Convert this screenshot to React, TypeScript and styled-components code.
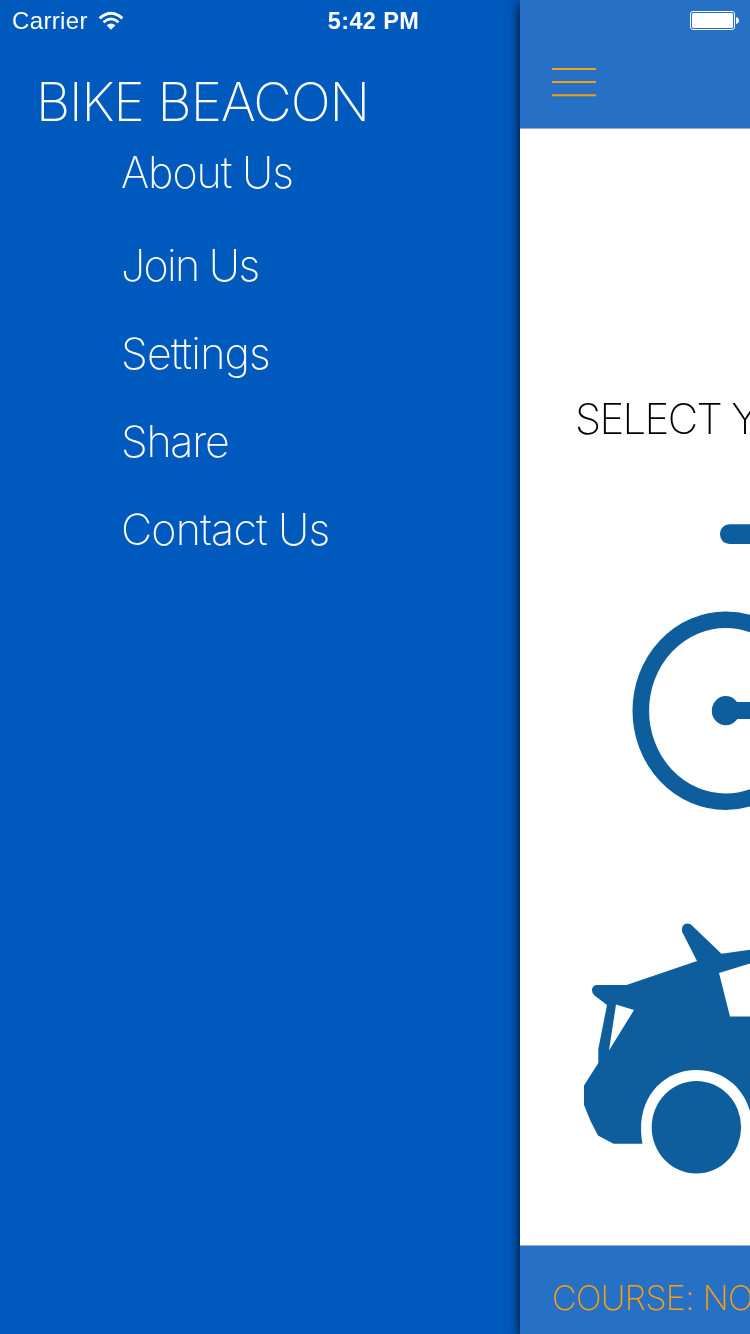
import React from "react";
import styled, { createGlobalStyle } from "styled-components";

const GlobalStyle = createGlobalStyle`
  * { box-sizing: border-box; }
  body { margin: 0; background: #0059bd; }
`;

const thin = `"Inter", "Helvetica Neue", sans-serif`;

const Screen = styled.div`
  position: relative;
  display: flex;
  width: 750px;
  height: 1334px;
  overflow: hidden;
  background: #0059bd;
  font-family: ${thin};
`;

const StatusBar = styled.header`
  position: absolute;
  inset: 0 0 auto 0;
  z-index: 2;
  display: grid;
  grid-template-columns: 1fr auto 1fr;
  align-items: center;
  height: 41px;
  padding: 0 11px 0 12px;
  color: #fff;
  font: 24px/41px "Liberation Sans", Arial, sans-serif;
`;

const Carrier = styled.div`
  display: flex;
  align-items: center;
  gap: 10px;
  letter-spacing: 0.35px;
`;

const Time = styled.div`
  padding: 2px 4px 0 0;
  font-weight: 700;
  font-size: 23.5px;
  line-height: 39px;
  letter-spacing: 0.35px;
`;

const Battery = styled.svg`
  justify-self: end;
  display: block;
`;

const Drawer = styled.nav`
  flex: 0 0 520px;
  padding-top: 72px;
  color: #fff;
  will-change: transform;
`;

const Title = styled.h1<{ $track: number }>`
  margin: 0 0 0 36px;
  font-size: 53px;
  font-weight: 200;
  line-height: 60px;
  letter-spacing: ${(p) => p.$track}px;
  white-space: nowrap;
`;

const Menu = styled.ul`
  margin: 0;
  padding: 0 0 0 121px;
  list-style: none;
`;

const MenuItem = styled.li<{ $height?: number; $gap?: number; $track: number }>`
  height: ${(p) => p.$height ?? 88}px;
  margin-bottom: ${(p) => p.$gap ?? 0}px;
  line-height: ${(p) => p.$height ?? 88}px;
  font-size: 43px;
  font-weight: 200;
  letter-spacing: ${(p) => p.$track}px;
  white-space: nowrap;
`;

const PanelFrame = styled.div`
  display: flex;
  box-shadow: 0 4px 11px rgba(0, 0, 0, 0.95);
  will-change: transform;
`;

const Panel = styled.main`
  flex: 0 0 230px;
  display: flex;
  flex-direction: column;
  overflow: hidden;
  background: #fff;
`;

const NavBar = styled.div`
  height: 129px;
  padding: 67px 0 0 32px;
  background: #2670c6;
  border-bottom: 1px solid #aaa9a9;
`;

const MenuButton = styled.button`
  display: block;
  padding: 0;
  border: 0;
  background: none;
`;

const Content = styled.section`
  flex: 1;
  display: flex;
  flex-direction: column;
  padding-top: 260px;
`;

const Heading = styled.h2`
  margin: 0 0 0 55px;
  height: 63px;
  color: #000;
  font-size: 42px;
  font-weight: 200;
  line-height: 60px;
  letter-spacing: -1.65px;
  white-space: nowrap;
`;

const Picture = styled.svg`
  display: block;
  flex: none;
`;

const Footer = styled.footer`
  height: 89px;
  padding: 16px 0 0 32px;
  background: #2670c6;
  border-top: 1px solid #aaa9a9;
  color: #ff9f0a;
  font-size: 34px;
  font-weight: 200;
  line-height: 72px;
  letter-spacing: -0.7px;
  white-space: nowrap;
`;

const items = [
  { label: "About Us", height: 81, gap: 8, track: -1.1 },
  { label: "Join Us", track: -1.7 },
  { label: "Settings", track: -0.85 },
  { label: "Share", track: -1.3 },
  { label: "Contact Us", track: -0.85 },
];

export default function App() {
  return (
    <>
      <GlobalStyle />
      <Screen>
        <StatusBar>
          <Carrier>
            Carrier
            <svg width="26" height="20" viewBox="0 0 26 20" fill="none" stroke="#fff">
              <path d="M1.7 7.4Q13 -2.8 24.3 7.4" strokeWidth="3" />
              <path d="M5.5 11.2Q13 4.6 20.5 11.2" strokeWidth="2.8" />
              <path d="M8.6 14.2Q13 10.6 17.4 14.2L13 18.8Z" fill="#fff" stroke="none" />
            </svg>
          </Carrier>
          <Time>5:42 PM</Time>
          <Battery width="49" height="19" viewBox="0 0 49 19">
            <rect x="0.5" y="0.5" width="44" height="18" rx="2.5" fill="none" stroke="#fff" />
            <rect x="2" y="2" width="41" height="15" rx="1.5" fill="#fff" />
            <path d="M46 6.2Q49 6.6 49 9.5T46 13Z" fill="#fff" />
          </Battery>
        </StatusBar>
        <Drawer>
          <Title $track={-1.05}>BIKE BEACON</Title>
          <Menu>
            {items.map((i) => (
              <MenuItem key={i.label} $height={i.height} $gap={i.gap} $track={i.track}>
                {i.label}
              </MenuItem>
            ))}
          </Menu>
        </Drawer>
        <PanelFrame>
          <Panel>
            <NavBar>
              <MenuButton aria-label="Menu">
                <Picture width="44" height="30" viewBox="0 0 44 30" stroke="#f59f14" strokeWidth="2">
                  <path d="M0 2H44M0 15H44M0 28.2H44" />
                </Picture>
              </MenuButton>
            </NavBar>
            <Content>
              <Heading>SELECT YOUR COURSE</Heading>
              <Picture width="230" height="448" viewBox="520 452 230 448" fill="#0e5e9e">
                <rect x="720" y="524.3" width="60" height="19.7" rx="9.5" />
                <ellipse cx="725.8" cy="710.7" rx="85" ry="91" fill="none" stroke="#0e5e9e" strokeWidth="16.6" />
                <ellipse cx="725.8" cy="710.7" rx="14" ry="14.6" />
                <path d="M726 702H760V719H726Z" />
              </Picture>
              <Picture width="230" height="345" viewBox="520 900 230 345" fill="#0e5e9e">
                <path
                  fillRule="evenodd"
                  d="M697 961L682.2 932Q681 926 685 924Q689.500 922.5 692.500 926L721.500 953.700L760 948.500V1140H751Q752 1127 749.700 1110C742 1085 721 1070 696.500 1070C661 1070 634.500 1101 642.500 1143.700H613.500L598 1135.500L590.500 1121L584 1105V1085.500L598.300 1063V1049L607 1005L594.500 995.500Q591.500 993 592 989Q593.500 985 597 985H626.500ZM719 973L730 1016.500H760V960.500ZM616 1004.500L609 1050.500L634 1010Z"
                />
                <ellipse cx="696.4" cy="1127.3" rx="44.7" ry="46.3" />
              </Picture>
            </Content>
            <Footer>COURSE: NONE</Footer>
          </Panel>
        </PanelFrame>
      </Screen>
    </>
  );
}
